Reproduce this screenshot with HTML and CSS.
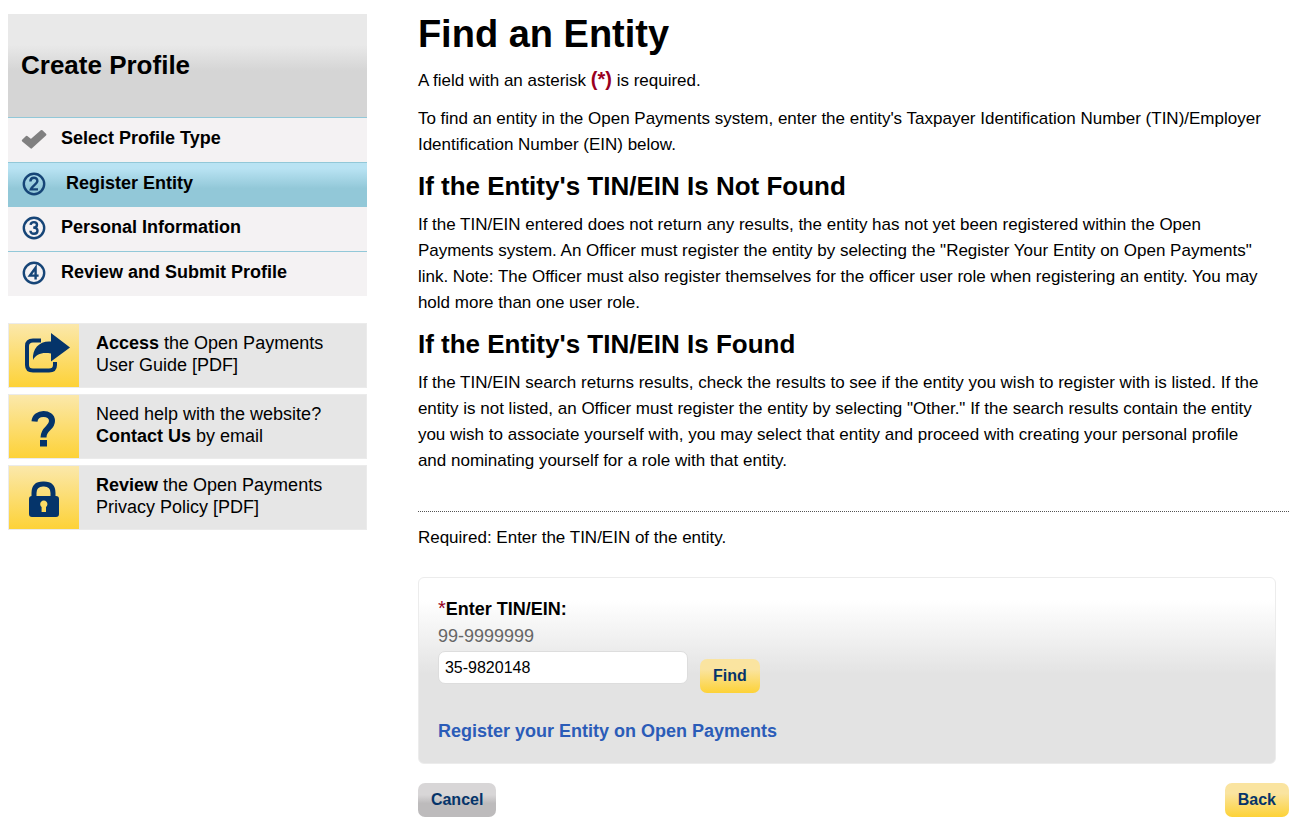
FILE: index.html
```html
<!DOCTYPE html>
<html lang="en">
<head>
<meta charset="UTF-8" />
<meta name="viewport" content="width=device-width, initial-scale=1" />
<title>Find an Entity</title>
<link rel="stylesheet" href="styles.css">
</head>
<body>
<div class="page">
  <aside class="sidebar">
    <nav class="steps" aria-label="Create Profile">
      <h2 class="steps-title">Create Profile</h2>
      <ol class="step-list">
        <li class="step">
          <svg class="step-icon" viewBox="0 0 26 26" aria-hidden="true">
            <path d="M2 13.6 L5.6 10 L10 13.4 L20.6 4.2 L24.2 7.600 L10.2 20.4 Z" fill="#808080" stroke="#808080" stroke-linejoin="round"/>
          </svg>
          <span>Select Profile Type</span>
        </li>
        <li class="step current" aria-current="step">
          <svg class="step-icon" viewBox="0 1 26 26" aria-hidden="true">
            <circle cx="13" cy="13" r="10.2"/>
            <path d="M9.4 10.4 C9.4 5.600 16.4 5.600 16.4 10 C16.4 12.8 10.8 15 9.8 18.4 H17"/>
          </svg>
          <span>Register Entity</span>
        </li>
        <li class="step">
          <svg class="step-icon" viewBox="0 1 26 26" aria-hidden="true">
            <circle cx="13" cy="13" r="10.2"/>
            <path d="M9.6 9.8 C10 6.2 16 6.2 16 9.8 C16 11.8 14.6 12.6 12.2 12.6 C15 12.6 16.5 13.6 16.5 15.8 C16.5 19.8 9.6 19.8 9.4 15.8"/>
          </svg>
          <span>Personal Information</span>
        </li>
        <li class="step">
          <svg class="step-icon" viewBox="0 1 26 26" aria-hidden="true">
            <circle cx="13" cy="13" r="10.2"/>
            <path d="M14.6 19.4 V7.8 L8.9 15.6 H17.6"/>
          </svg>
          <span>Review and Submit Profile</span>
        </li>
      </ol>
    </nav>

    <div class="help-links">
      <a class="help-link" href="#guide">
        <span class="help-icon">
          <svg viewBox="0 0 70 62" aria-hidden="true">
            <path d="M32 16.5 H24 Q18 16.5 18 22 V41 Q18 46.5 24 46.5 H40 Q46 46.5 46 41 V38" fill="none" stroke="#05346a" stroke-width="4"/>
            <path d="M42 9 L61 23.5 L42 37.5 V29.5 C33 28 27 30 24 36 C23 24 31 16.5 42 17.5 Z" fill="#05346a"/>
          </svg>
        </span>
        <span class="help-text"><strong>Access</strong> the Open Payments<br>User Guide [PDF]</span>
      </a>
      <a class="help-link" href="#contact">
        <span class="help-icon">
          <svg viewBox="0 0 70 62" aria-hidden="true">
            <path d="M25.5 26.5 C26 16.5 43 16.5 43 26 C43 33.5 34.5 33 34.500 42.5" fill="none" stroke="#05346a" stroke-width="6"/>
            <path d="M31 45 H38 V51.5 H31 Z" fill="#05346a"/>
          </svg>
        </span>
        <span class="help-text">Need help with the website?<br><strong>Contact Us</strong> by email</span>
      </a>
      <a class="help-link" href="#privacy">
        <span class="help-icon">
          <svg viewBox="0 0 70 62" aria-hidden="true">
            <path d="M25 33 V27 Q25 18 34 18 H35 Q44 18 44 27 V33" fill="none" stroke="#05346a" stroke-width="5"/>
            <path fill-rule="evenodd" d="M23 30 H47 Q50 30 50 33 V48 Q50 51 47 51 H23 Q20 51 20 48 V33 Q20 30 23 30 Z M32.6 46 H37 V41 A3.6 3.6 0 1 0 32.6 41 Z" fill="#05346a"/>
          </svg>
        </span>
        <span class="help-text"><strong>Review</strong> the Open Payments<br>Privacy Policy [PDF]</span>
      </a>
    </div>
  </aside>

  <main class="content">
    <h1>Find an Entity</h1>
    <p>A field with an asterisk <span class="required">(*)</span> is required.</p>
    <p>To find an entity in the Open Payments system, enter the entity's Taxpayer Identification Number (TIN)/Employer Identification Number (EIN) below.</p>

    <h2>If the Entity's TIN/EIN Is Not Found</h2>
    <p>If the TIN/EIN entered does not return any results, the entity has not yet been registered within the Open Payments system. An Officer must register the entity by selecting the "Register Your Entity on Open Payments" link. Note: The Officer must also register themselves for the officer user role when registering an entity. You may hold more than one user role.</p>

    <h2>If the Entity's TIN/EIN Is Found</h2>
    <p>If the TIN/EIN search returns results, check the results to see if the entity you wish to register with is listed. If the entity is not listed, an Officer must register the entity by selecting "Other." If the search results contain the entity you wish to associate yourself with, you may select that entity and proceed with creating your personal profile and nominating yourself for a role with that entity.</p>

    <hr>
    <p>Required: Enter the TIN/EIN of the entity.</p>

    <form id="findForm" class="find-box" autocomplete="off">
      <label for="tinInput"><span class="required">*</span>Enter TIN/EIN:</label>
      <div id="tinHelp" class="hint">99-9999999</div>
      <div class="find-row">
        <input type="text" id="tinInput" value="35-9820148" required aria-describedby="tinHelp" />
        <button type="submit" class="btn">Find</button>
      </div>
      <a class="register-link" href="#register">Register your Entity on Open Payments</a>
    </form>

    <div class="actions">
      <button type="button" class="btn btn-cancel">Cancel</button>
      <button type="button" class="btn">Back</button>
    </div>
  </main>
</div>
</body>
</html>
```
FILE: styles.css
```css
:root {
  --navy: #05346a;
  --line-blue: #92c8d8;
  --required: #990021;
}
* {
  box-sizing: border-box;
}
body {
  margin: 0;
  font-family: "Liberation Sans", Arial, Helvetica, sans-serif;
  font-size: 18px;
  line-height: 26px;
  color: #000;
  background: #fff;
}
.page {
  display: flex;
  gap: 4%;
  padding: 12px 12px 10px 8px;
}
.sidebar {
  width: 28%;
  flex-shrink: 0;
  padding-top: 2px;
}
.steps-title {
  margin: 0;
  padding: 35px 13px 36px;
  font-size: 26px;
  line-height: 32px;
  background: linear-gradient(#e9e9e9 30%, #d5d5d5 55%);
}
.step-list {
  margin: 0;
  padding: 0;
  list-style: none;
}
.step {
  display: flex;
  align-items: center;
  gap: 14px;
  height: 45px;
  padding: 0 13px;
  font-weight: 700;
  background: #f4f2f3;
  border-top: 1px solid var(--line-blue);
}
.step span {
  padding-bottom: 4px;
}
.step.current {
  gap: 19px;
  background: linear-gradient(#b9e3f3 12%, #92c8d8 58%);
}
.step.current + .step {
  height: 44px;
  border-top: 0;
}
.step-icon {
  width: 26px;
  height: 26px;
  fill: none;
  stroke: #164577;
  stroke-width: 2.4;
}
.help-links {
  display: flex;
  flex-direction: column;
  gap: 6px;
  margin-top: 27px;
}
.help-link {
  display: flex;
  gap: 17px;
  border: 1px solid #ebebeb;
  background: #e6e6e6;
  color: #000;
  text-decoration: none;
}
.help-icon {
  display: flex;
  width: 70px;
  flex-shrink: 0;
  background: linear-gradient(#fbe8ab, #fdd237);
}
.help-icon svg {
  width: 70px;
  height: 62px;
}
.help-text {
  padding: 8px 0 11px;
  line-height: 22px;
}
.content {
  flex: 1;
  min-width: 0;
}
h1 {
  margin: 0 0 12px;
  font-size: 38px;
  line-height: 44px;
}
.content h2 {
  margin: 0 0 10px;
  font-size: 26px;
  line-height: 32px;
}
p {
  margin: 0 0 12px;
  padding-right: 24px;
  font-size: 17px;
}
.required {
  color: var(--required);
  font-size: 20px;
  font-weight: 700;
  line-height: 20px;
}
hr {
  margin: 37px 0 13px;
  border: 0;
  border-top: 1px dotted #555;
}
.find-box {
  display: flex;
  flex-direction: column;
  align-items: flex-start;
  margin: 26px 13px 19px 0;
  padding: 18px 19px 19px;
  border: 1px solid #ececec;
  border-radius: 6px;
  background: linear-gradient(#fff 12%, #e3e3e3 52%);
}
.find-box label {
  font-weight: 700;
}
.find-box .required {
  font-weight: 400;
}
.hint {
  padding-top: 1px;
  color: #666;
}
.find-row {
  display: flex;
  gap: 12px;
  margin: 2px 0 25px;
}
input[type="text"] {
  width: 250px;
  height: 33px;
  padding: 0 6px;
  font-family: inherit;
  font-size: 16px;
  color: #000;
  background: #fff;
  border: 1px solid #ddd;
  border-radius: 7px;
}
.btn {
  height: 34px;
  padding: 0 13px;
  font-family: inherit;
  font-size: 16px;
  font-weight: 700;
  color: var(--navy);
  background: linear-gradient(#fae4a0 30%, #fdd237);
  border: 0;
  border-radius: 7px;
  cursor: pointer;
}
.find-row .btn {
  margin-top: 8px;
}
.btn-cancel {
  background: linear-gradient(#d8d6d7 35%, #bdbbbc 60%);
}
.register-link {
  color: #2b5cb8;
  font-weight: 700;
  text-decoration: none;
}
.actions {
  display: flex;
  justify-content: space-between;
}
```
